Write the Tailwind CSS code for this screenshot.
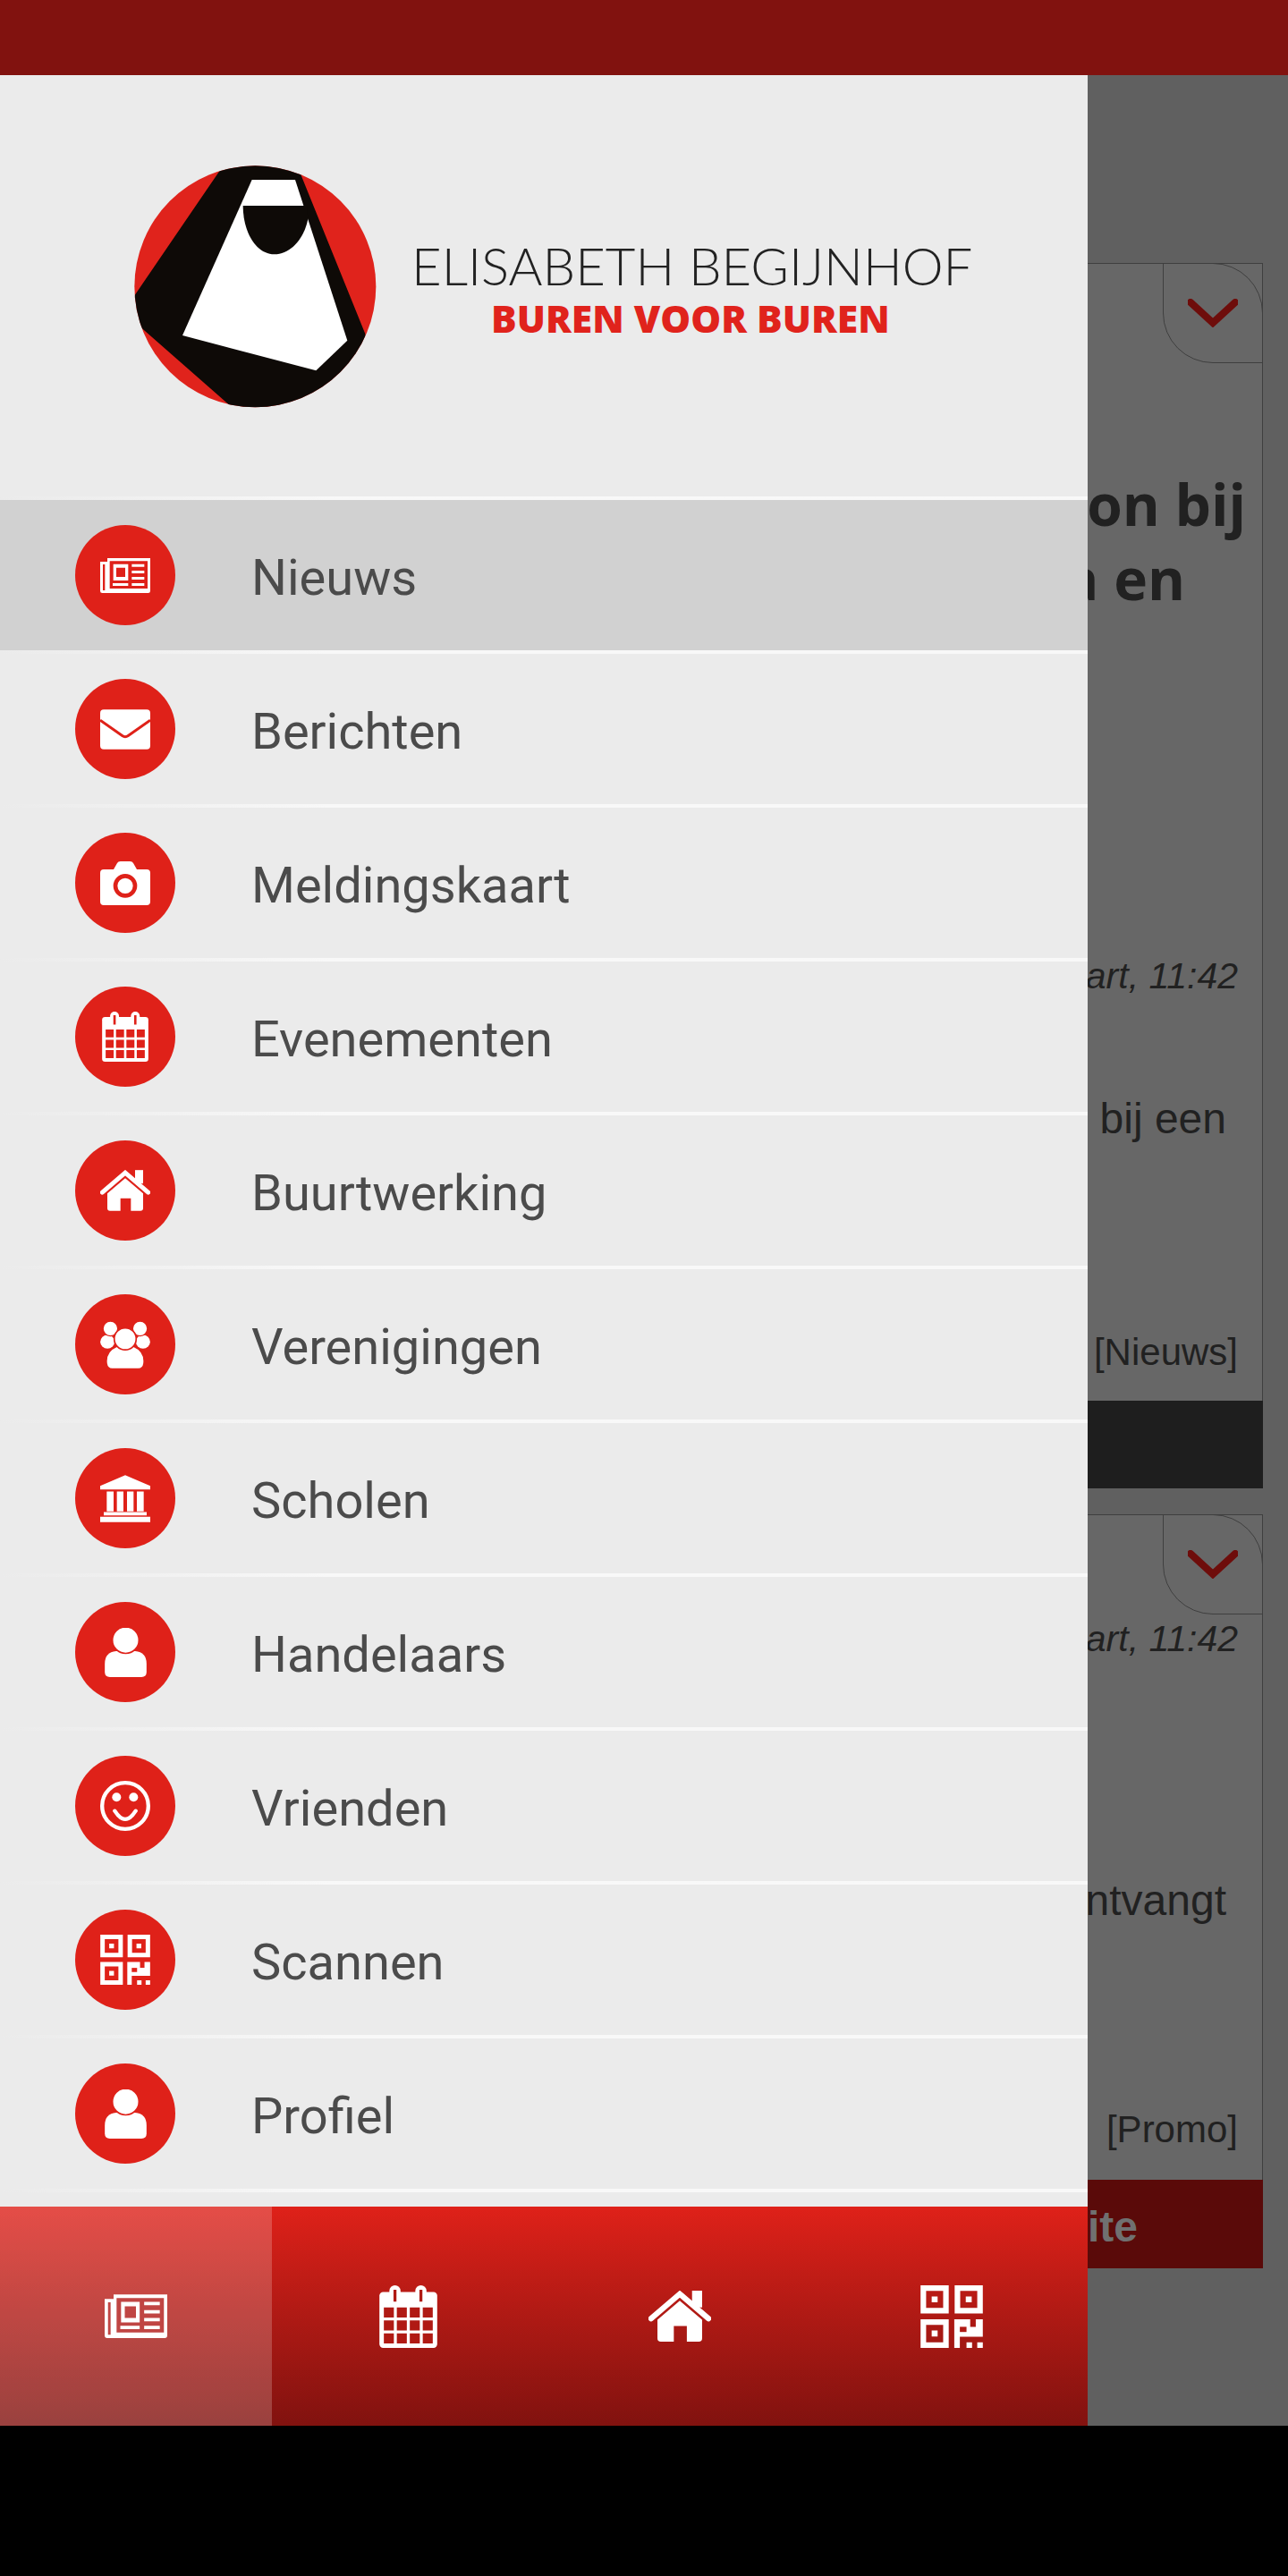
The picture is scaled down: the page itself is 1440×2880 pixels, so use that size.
<!DOCTYPE html>
<html lang="nl">
  <head>
    <meta charset="UTF-8" />
    <title>Elisabeth Begijnhof</title>
    <script src="https://cdn.jsdelivr.net/npm/@tailwindcss/browser@4"></script>
  </head>
  <body class="bg-black">
    <svg class="hidden" xmlns="http://www.w3.org/2000/svg">
      <defs>
        <symbol id="i-news" viewBox="0 0 168 117">
          <path fill="#fff" d="M24 0H168V110a7 7 0 0 1-7 7H7a7 7 0 0 1-7-7V12H24Z" />
          <path fill="currentColor" d="M9 21h7v87H9zM32 10h127v92H32z" />
          <path fill="#fff" fill-rule="evenodd" d="M44 20h50v55H44zM54 32v31h30V32z" />
          <path fill="#fff" d="M106 20h42v9h-42zM106 42h42v9h-42zM106 63h42v9h-42zM42 84h52v9H42zM106 84h42v9h-42z" />
        </symbol>
        <symbol id="i-mail" viewBox="0 0 168 134">
          <rect fill="#fff" width="168" height="134" rx="12" />
          <path fill="none" stroke="currentColor" stroke-width="9" d="M0 36L74 88Q84 95 94 88L168 36" />
        </symbol>
        <symbol id="i-camera" viewBox="0 0 168 147">
          <path fill="#fff" d="M12 27H45L57 6Q60 0 68 0H100Q108 0 111 6L123 27H156Q168 27 168 39V135Q168 147 156 147H12Q0 147 0 135V39Q0 27 12 27Z" />
          <circle cx="84" cy="82" r="33" fill="#fff" stroke="currentColor" stroke-width="14" />
        </symbol>
        <symbol id="i-calendar" viewBox="0 0 156 169">
          <rect fill="#fff" y="18" width="156" height="151" rx="10" />
          <rect fill="#fff" x="27" width="30" height="50" rx="15" />
          <rect fill="#fff" x="97" width="30" height="50" rx="15" />
          <path fill="currentColor" d="M38 12h8v32h-8zM108 12h8v32h-8z" />
          <path fill="currentColor" d="M12 60h27v27H12zM47 60h27v27H47zM82 60h27v27H82zM117 60h27v27h-27zM12 95h27v27H12zM47 95h27v27H47zM82 95h27v27H82zM117 95h27v27h-27zM12 130h27v27H12zM47 130h27v27H47zM82 130h27v27H82zM117 130h27v27h-27z" />
        </symbol>
        <symbol id="i-home" viewBox="0 0 168 137">
          <path fill="#fff" d="M117 0h27v45h-27z" />
          <path fill="none" stroke="#fff" stroke-width="15" stroke-linecap="round" d="M7 75L84 9L161 75" />
          <path fill="#fff" d="M84 27L144 78V128Q144 137 135 137H103V95H68V137H33Q24 137 24 128V78Z" />
        </symbol>
        <symbol id="i-group" viewBox="0 0 168 160">
          <ellipse cx="24" cy="70" rx="24" ry="23" fill="#fff" />
          <ellipse cx="144" cy="70" rx="24" ry="23" fill="#fff" />
          <circle cx="34" cy="25" r="25" fill="#fff" stroke="currentColor" stroke-width="4" />
          <circle cx="134" cy="25" r="25" fill="#fff" stroke="currentColor" stroke-width="4" />
          <path fill="#fff" stroke="currentColor" stroke-width="5" d="M20 135Q20 100 55 85H113Q148 100 148 135Q148 162 128 162H40Q20 162 20 135Z" />
          <circle cx="84" cy="60" r="37" fill="#fff" stroke="currentColor" stroke-width="5" />
        </symbol>
        <symbol id="i-bank" viewBox="0 0 168 158">
          <path fill="#fff" d="M84 0L168 36V48H0V36ZM22 55h23v67H22zM56 55h22v67H56zM90 55h22v67H90zM123 55h23v67h-23zM12 124h144v11H12zM0 140h168v18H0z" />
        </symbol>
        <symbol id="i-user" viewBox="0 0 140 165">
          <path fill="#fff" d="M0 120Q0 82 38 78H102Q140 82 140 120V148Q140 165 123 165H17Q0 165 0 148Z" />
          <circle cx="70" cy="41" r="44.5" fill="#fff" stroke="currentColor" stroke-width="5" />
        </symbol>
        <symbol id="i-smile" viewBox="0 0 168 168">
          <circle cx="84" cy="84" r="77.5" fill="none" stroke="#fff" stroke-width="13" />
          <circle cx="55" cy="55" r="15" fill="#fff" />
          <circle cx="112" cy="55" r="15" fill="#fff" />
          <path fill="none" stroke="#fff" stroke-width="13" stroke-linecap="round" d="M49 101Q84 156 119 101" />
        </symbol>
        <symbol id="i-qr" viewBox="0 0 168 169">
          <path fill="#fff" fill-rule="evenodd" d="M0 0h76v76H0zM15 15v46h46V15zM30 30h16v16H30zM92 0h76v76H92zM107 15v46h46V15zM122 30h16v16h-16zM0 92h76v77H0zM15 107v47h46v-47zM30 122h16v16H30z" />
          <path fill="#fff" d="M91 97h15v72H91zM91 92h43v20H91zM106 112h62v27h-62zM149 92h19v47h-19zM124 154h15v15h-15zM153 154h15v15h-15z" />
          <path fill="currentColor" d="M106 112h18v14h-18z" />
        </symbol>
      </defs>
    </svg>

    <div class="relative w-[1440px] h-[2880px] overflow-hidden bg-black">
      <div class="h-[84px] bg-[#81120f]"></div>

      <main class="relative h-[2628px] overflow-hidden bg-[#606060] pt-[210px] pr-[28px] text-[#212121] font-['Liberation_Sans',sans-serif]">
        <!-- page behind the drawer, only the right edge shows -->
        <article class="relative border border-[#3f3f3f] bg-[#676767] h-[1370px] flex flex-col text-right">
          <button class="absolute -top-px -right-px w-[112px] h-[112px] flex items-center justify-center rounded-tr-[56px] rounded-bl-[56px] border border-[#3f3f3f]">
            <svg width="56" height="32" viewBox="0 0 56 32"><path d="M3 4L28 27L53 4" fill="none" stroke="#6e0d0b" stroke-width="8" stroke-linecap="round" /></svg>
          </button>
          <h2 class="mt-[227px] h-[83px] leading-[83px] pr-[18px] text-[64px] font-bold font-['Open_Sans',sans-serif]">on bij</h2>
          <h2 class="h-[83px] leading-[83px] pr-[86px] text-[64px] font-bold font-['Open_Sans',sans-serif]">a en</h2>
          <p class="mt-[378px] h-[50px] leading-[50px] pr-[27px] text-[41px] italic">art, 11:42</p>
          <p class="mt-[110px] h-[50px] leading-[50px] pr-[40px] text-[48px]">bij een</p>
          <p class="mt-[211px] h-[50px] leading-[50px] pr-[27px] text-[42px]">[Nieuws]</p>
          <div class="mt-auto -mb-px -mr-px h-[98px] bg-[#1e1e1e]"></div>
        </article>

        <article class="relative mt-[29px] border border-[#3f3f3f] bg-[#676767] h-[843px] flex flex-col text-right">
          <button class="absolute -top-px -right-px w-[112px] h-[112px] flex items-center justify-center rounded-tr-[56px] rounded-bl-[56px] border border-[#3f3f3f]">
            <svg width="56" height="32" viewBox="0 0 56 32"><path d="M3 4L28 27L53 4" fill="none" stroke="#6e0d0b" stroke-width="8" stroke-linecap="round" /></svg>
          </button>
          <p class="mt-[113px] h-[50px] leading-[50px] pr-[27px] text-[41px] italic">art, 11:42</p>
          <p class="mt-[243px] h-[50px] leading-[50px] pr-[40px] text-[48px]">ntvangt</p>
          <p class="mt-[206px] h-[50px] leading-[50px] pr-[27px] text-[42px]">[Promo]</p>
          <div class="mt-auto -mb-px -mr-px h-[99px] bg-[#5a0a09] flex items-center justify-end pr-[140px] pt-[6px] text-[48px] font-bold text-[#707070]">ite</div>
        </article>

        <!-- drawer -->
        <aside class="absolute left-0 top-0 bottom-0 w-[1216px] bg-[#ebebeb] flex flex-col font-[Roboto,sans-serif] text-[#4b4b4b]">
          <div class="h-[471px] relative flex items-center">
            <svg class="absolute left-[130px] top-[86px]" width="300" height="300" viewBox="0 0 900 900">
              <defs><clipPath id="logo-clip"><circle cx="466" cy="451" r="405" /></clipPath></defs>
              <circle cx="466" cy="451" r="405" fill="#e0231c" />
              <g clip-path="url(#logo-clip)">
                <path fill="#0e0a07" d="M345 65L400 20H600L620 78L835 610L860 880H415L85 590L40 510L62 480Z" />
                <path fill="#fff" d="M455 93H600L775 632L670 733L222 615Z" />
                <path fill="#0e0a07" d="M425 180H640L643 225C630 290 585 343 530 343C470 343 425 270 425 180Z" />
              </g>
            </svg>
            <div class="absolute left-[460px] top-[184px] text-[58px] leading-[58px] font-light text-[#222] font-[Lato,sans-serif] whitespace-nowrap">ELISABETH BEGIJNHOF</div>
            <div class="absolute left-[549px] top-[247px] text-[42.6px] leading-[48px] font-extrabold text-[#e0231c] font-['Open_Sans',sans-serif] whitespace-nowrap">BUREN VOOR BUREN</div>
          </div>

          <nav class="flex flex-col text-[56px] text-[#e0231c]">
            <div class="h-[4px] bg-linear-to-r from-[#ebebeb] to-[#f8f8f8] to-30%"></div>
            <a class="h-[168px] flex items-center pl-[84px] bg-[#d1d1d1]">
              <span class="w-[112px] h-[112px] rounded-full bg-[#df2119] flex items-center justify-center text-[#df2119]"><svg class="w-[56px] h-[39px]"><use href="#i-news" /></svg></span>
              <span class="ml-[85px] pt-[6px] text-[#4b4b4b]">Nieuws</span>
            </a>
            <div class="h-[4px] bg-linear-to-r from-[#ebebeb] to-[#f8f8f8] to-30%"></div>
            <a class="h-[168px] flex items-center pl-[84px]">
              <span class="w-[112px] h-[112px] rounded-full bg-[#df2119] flex items-center justify-center text-[#df2119]"><svg class="w-[56px] h-[45px]"><use href="#i-mail" /></svg></span>
              <span class="ml-[85px] pt-[6px] text-[#4b4b4b]">Berichten</span>
            </a>
            <div class="h-[4px] bg-linear-to-r from-[#ebebeb] to-[#f8f8f8] to-30%"></div>
            <a class="h-[168px] flex items-center pl-[84px]">
              <span class="w-[112px] h-[112px] rounded-full bg-[#df2119] flex items-center justify-center text-[#df2119]"><svg class="w-[56px] h-[49px]"><use href="#i-camera" /></svg></span>
              <span class="ml-[85px] pt-[6px] text-[#4b4b4b]">Meldingskaart</span>
            </a>
            <div class="h-[4px] bg-linear-to-r from-[#ebebeb] to-[#f8f8f8] to-30%"></div>
            <a class="h-[168px] flex items-center pl-[84px]">
              <span class="w-[112px] h-[112px] rounded-full bg-[#df2119] flex items-center justify-center text-[#df2119]"><svg class="w-[52px] h-[56px]"><use href="#i-calendar" /></svg></span>
              <span class="ml-[85px] pt-[6px] text-[#4b4b4b]">Evenementen</span>
            </a>
            <div class="h-[4px] bg-linear-to-r from-[#ebebeb] to-[#f8f8f8] to-30%"></div>
            <a class="h-[168px] flex items-center pl-[84px]">
              <span class="w-[112px] h-[112px] rounded-full bg-[#df2119] flex items-center justify-center text-[#df2119]"><svg class="w-[56px] h-[46px]"><use href="#i-home" /></svg></span>
              <span class="ml-[85px] pt-[6px] text-[#4b4b4b]">Buurtwerking</span>
            </a>
            <div class="h-[4px] bg-linear-to-r from-[#ebebeb] to-[#f8f8f8] to-30%"></div>
            <a class="h-[168px] flex items-center pl-[84px]">
              <span class="w-[112px] h-[112px] rounded-full bg-[#df2119] flex items-center justify-center text-[#df2119]"><svg class="w-[56px] h-[53px]"><use href="#i-group" /></svg></span>
              <span class="ml-[85px] pt-[6px] text-[#4b4b4b]">Verenigingen</span>
            </a>
            <div class="h-[4px] bg-linear-to-r from-[#ebebeb] to-[#f8f8f8] to-30%"></div>
            <a class="h-[168px] flex items-center pl-[84px]">
              <span class="w-[112px] h-[112px] rounded-full bg-[#df2119] flex items-center justify-center text-[#df2119]"><svg class="w-[56px] h-[53px]"><use href="#i-bank" /></svg></span>
              <span class="ml-[85px] pt-[6px] text-[#4b4b4b]">Scholen</span>
            </a>
            <div class="h-[4px] bg-linear-to-r from-[#ebebeb] to-[#f8f8f8] to-30%"></div>
            <a class="h-[168px] flex items-center pl-[84px]">
              <span class="w-[112px] h-[112px] rounded-full bg-[#df2119] flex items-center justify-center text-[#df2119]"><svg class="w-[47px] h-[55px]"><use href="#i-user" /></svg></span>
              <span class="ml-[85px] pt-[6px] text-[#4b4b4b]">Handelaars</span>
            </a>
            <div class="h-[4px] bg-linear-to-r from-[#ebebeb] to-[#f8f8f8] to-30%"></div>
            <a class="h-[168px] flex items-center pl-[84px]">
              <span class="w-[112px] h-[112px] rounded-full bg-[#df2119] flex items-center justify-center text-[#df2119]"><svg class="w-[56px] h-[56px]"><use href="#i-smile" /></svg></span>
              <span class="ml-[85px] pt-[6px] text-[#4b4b4b]">Vrienden</span>
            </a>
            <div class="h-[4px] bg-linear-to-r from-[#ebebeb] to-[#f8f8f8] to-30%"></div>
            <a class="h-[168px] flex items-center pl-[84px]">
              <span class="w-[112px] h-[112px] rounded-full bg-[#df2119] flex items-center justify-center text-[#df2119]"><svg class="w-[56px] h-[56px]"><use href="#i-qr" /></svg></span>
              <span class="ml-[85px] pt-[6px] text-[#4b4b4b]">Scannen</span>
            </a>
            <div class="h-[4px] bg-linear-to-r from-[#ebebeb] to-[#f8f8f8] to-30%"></div>
            <a class="h-[168px] flex items-center pl-[84px]">
              <span class="w-[112px] h-[112px] rounded-full bg-[#df2119] flex items-center justify-center text-[#df2119]"><svg class="w-[47px] h-[55px]"><use href="#i-user" /></svg></span>
              <span class="ml-[85px] pt-[6px] text-[#4b4b4b]">Profiel</span>
            </a>
            <div class="h-[4px] bg-linear-to-r from-[#ebebeb] to-[#f8f8f8] to-30%"></div>
          </nav>

          <div class="mt-auto h-[245px] grid grid-cols-4 bg-linear-to-b from-[#df2119] to-[#81120f] text-[#b01a14]">
            <div class="flex items-center justify-center bg-white/20 text-[#c04543]"><svg class="w-[70px] h-[49px]"><use href="#i-news" /></svg></div>
            <div class="flex items-center justify-center"><svg class="w-[65px] h-[70px]"><use href="#i-calendar" /></svg></div>
            <div class="flex items-center justify-center"><svg class="w-[70px] h-[57px]"><use href="#i-home" /></svg></div>
            <div class="flex items-center justify-center"><svg class="w-[70px] h-[70px]"><use href="#i-qr" /></svg></div>
          </div>
        </aside>
      </main>
    </div>
  </body>
</html>
